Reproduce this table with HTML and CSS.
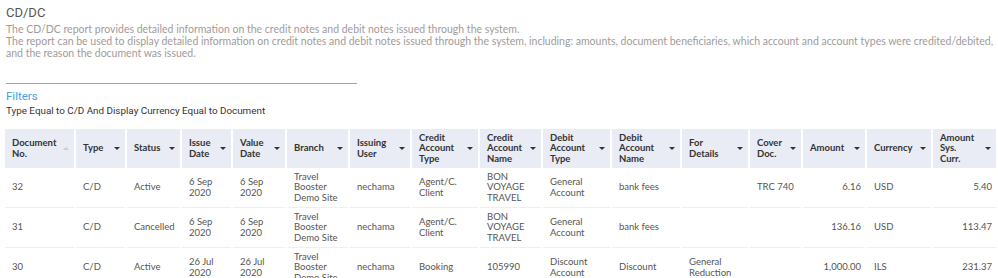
FILE: index.html
```html
<!DOCTYPE html>
<html>
<head>
<meta charset="utf-8">
<link rel="stylesheet" href="styles.css">
</head>
<body>
<div class="page">
  <h1 class="title">CD/DC</h1>
  <div class="desc">
    <div>The CD/DC report provides detailed information on the credit notes and debit notes issued through the system.</div>
    <div>The report can be used to display detailed information on credit notes and debit notes issued through the system, including: amounts, document beneficiaries, which account and account types were credited/debited, and the reason the document was issued.</div>
  </div>
  <div class="filters">
    <div class="filters-title">Filters</div>
    <div class="filters-text">Type Equal to C/D And Display Currency Equal to Document</div>
  </div>
</div>
<table class="grid">
  <colgroup>
    <col class="w69"><col class="w49"><col class="w53"><col class="w49"><col class="w52"><col class="w61"><col class="w60"><col class="w66"><col class="w61"><col class="w67"><col class="w68"><col class="w66"><col class="w51"><col class="w62"><col class="w64"><col class="w63">
  </colgroup>
  <thead>
    <tr>
      <th><div class="hc"><span>Document No.</span><i class="up"></i></div></th>
      <th><div class="hc"><span>Type</span><i class="dn"></i></div></th>
      <th><div class="hc"><span>Status</span><i class="dn"></i></div></th>
      <th><div class="hc"><span>Issue Date</span><i class="dn"></i></div></th>
      <th><div class="hc"><span>Value Date</span><i class="dn"></i></div></th>
      <th><div class="hc"><span>Branch</span><i class="dn"></i></div></th>
      <th><div class="hc"><span>Issuing User</span><i class="dn"></i></div></th>
      <th><div class="hc"><span>Credit Account Type</span><i class="dn"></i></div></th>
      <th><div class="hc"><span>Credit Account Name</span><i class="dn"></i></div></th>
      <th><div class="hc"><span>Debit Account Type</span><i class="dn"></i></div></th>
      <th><div class="hc"><span>Debit Account Name</span><i class="dn"></i></div></th>
      <th><div class="hc"><span>For Details</span><i class="dn"></i></div></th>
      <th><div class="hc"><span>Cover Doc.</span><i class="dn"></i></div></th>
      <th><div class="hc"><span>Amount</span><i class="dn"></i></div></th>
      <th><div class="hc"><span>Currency</span><i class="dn"></i></div></th>
      <th><div class="hc"><span class="narrow">Amount Sys. Curr.</span><i class="dn"></i></div></th>
    </tr>
  </thead>
  <tbody>
    <tr>
      <td>32</td><td>C/D</td><td>Active</td><td>6 Sep 2020</td><td>6 Sep 2020</td><td>Travel Booster Demo Site</td><td>nechama</td><td>Agent/C. Client</td><td>BON VOYAGE TRAVEL</td><td>General Account</td><td>bank fees</td><td></td><td>TRC 740</td><td class="num">6.16</td><td>USD</td><td class="num">5.40</td>
    </tr>
    <tr>
      <td>31</td><td>C/D</td><td>Cancelled</td><td>6 Sep 2020</td><td>6 Sep 2020</td><td>Travel Booster Demo Site</td><td>nechama</td><td>Agent/C. Client</td><td>BON VOYAGE TRAVEL</td><td>General Account</td><td>bank fees</td><td></td><td></td><td class="num">136.16</td><td>USD</td><td class="num">113.47</td>
    </tr>
    <tr>
      <td>30</td><td>C/D</td><td>Active</td><td>26 Jul 2020</td><td>26 Jul 2020</td><td>Travel Booster Demo Site</td><td>nechama</td><td>Booking</td><td>105990</td><td>Discount Account</td><td>Discount</td><td>General Reduction</td><td></td><td class="num">1,000.00</td><td>ILS</td><td class="num">231.37</td>
    </tr>
  </tbody>
</table>
</body>
</html>
```

FILE: styles.css
```css
html, body {
  margin: 0;
  padding: 0;
  background: #fff;
  overflow: hidden;
}
body {
  font-family: Lato, "Liberation Sans", sans-serif;
}
.page {
  padding: 0 0 0 6px;
}
.title {
  margin: 0;
  padding-top: 5px;
  font-family: Roboto, sans-serif;
  font-size: 13px;
  font-weight: 400;
  line-height: 15px;
  color: #555;
}
.desc {
  margin-top: 3px;
  width: 995px;
  font-size: 10.5px;
  line-height: 12px;
  color: #9f9b9b;
}
.filters {
  margin-top: 24px;
  width: 351px;
  border-top: 1px solid #63b7e9;
  padding-top: 5px;
}
.filters-title {
  font-family: Roboto, sans-serif;
  font-size: 11.5px;
  line-height: 14px;
  color: #3da1e3;
}
.filters-text {
  margin-top: 1px;
  font-family: Roboto, sans-serif;
  font-size: 9.85px;
  line-height: 13px;
  color: #333;
}
.grid {
  margin-top: 12px;
  margin-left: 3px;
  border-collapse: separate;
  border-spacing: 2px 0;
  table-layout: fixed;
  width: 995px;
  font-size: 9.5px;
  line-height: 10.5px;
}
.w49 { width: 49px; }
.w51 { width: 51px; }
.w52 { width: 52px; }
.w53 { width: 53px; }
.w60 { width: 60px; }
.w61 { width: 61px; }
.w62 { width: 62px; }
.w63 { width: 63px; }
.w64 { width: 64px; }
.w66 { width: 66px; }
.w67 { width: 67px; }
.w68 { width: 68px; }
.w69 { width: 69px; }
.grid th {
  background: #e9ebf5;
  height: 39px;
  padding: 0 5px 0 7px;
  text-align: left;
  font-weight: 700;
  color: #333;
  vertical-align: middle;
}
.hc {
  display: flex;
  align-items: center;
  justify-content: space-between;
  gap: 4px;
}
.hc span {
  display: block;
}
.hc span.narrow {
  width: 36px;
}
.hc i {
  flex: none;
  width: 0;
  height: 0;
  border-left: 3px solid transparent;
  border-right: 3px solid transparent;
}
.hc i.dn {
  border-top: 3px solid #333;
}
.hc i.up {
  border-bottom: 3px solid #ccc;
}
.grid td {
  height: 39px;
  padding: 0 5px 0 7px;
  border-bottom: 1px solid #efefef;
  color: #555;
  vertical-align: middle;
}
.grid td.num {
  text-align: right;
  padding-right: 4px;
}
```
